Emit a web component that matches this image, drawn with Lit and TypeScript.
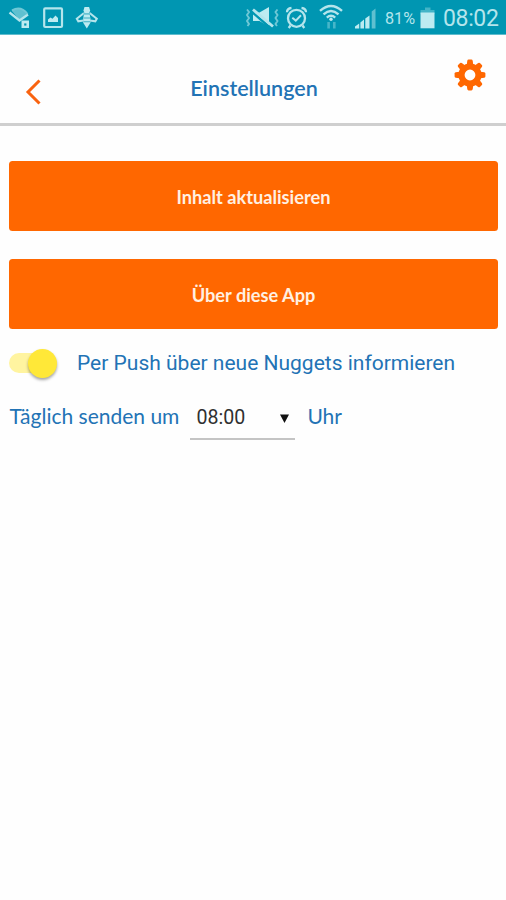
import { LitElement, html, css, svg } from "lit";
import { customElement, property, state } from "lit/decorators.js";
import { classMap } from "lit/directives/class-map.js";

@customElement("status-bar")
class StatusBar extends LitElement {
  static styles = css`
    :host {
      display: flex;
      background: #0096b2;
      border-bottom: 1px solid #5fbccd;
      box-sizing: border-box;
      height: 35px;
      color: #b4e5ec;
      font-family: Roboto, sans-serif;
      white-space: nowrap;
    }
    svg {
      display: block;
      height: 34px;
      flex: none;
      fill: none;
      stroke: #b4e5ec;
      stroke-width: 2;
    }
    .solid {
      fill: #bdebf1;
      stroke: none;
    }
    .dim {
      fill: #5fc0d0;
      stroke: none;
    }
    .faint {
      stroke: #6fc8d6;
    }
    .hole {
      fill: #0096b2;
      stroke: none;
    }
    .spacer {
      flex: 1;
    }
    .percent {
      width: 35px;
      font-size: 16.2px;
      line-height: 37px;
    }
    .clock {
      width: 63px;
      font-size: 23px;
      line-height: 37px;
      letter-spacing: -0.35px;
    }
  `;

  render() {
    return html`
      <svg width="36" viewBox="0 0 36 34">
        <path class="dim" d="M11.5 10.5Q20 5 28 14L19.5 20z" />
        <path d="M9.5 12.5 19.5 20.5 28 14.5" stroke-width="2.3" />
        <path class="faint" d="M12 10.3Q21 5.5 27.5 14" />
        <path class="solid" d="M21.5 20.5h7.5v7.5h-7.5z" />
        <path class="hole" d="M24.2 23.4h2.2v2.2h-2.2z" />
      </svg>
      <svg width="34" viewBox="36 0 34 34">
        <rect x="44.2" y="8.4" width="17.8" height="18.6" rx="1" stroke-width="2.2" />
        <path class="solid" d="M48 22v-2.5l2.5-2 2 1.2 3-3.2 2.5 2.5V22z" />
      </svg>
      <svg width="40" viewBox="70 0 40 34">
        <path class="solid" d="M84.5 7h4.6l1 3.5-1 3h-4.6l-1-3z" />
        <path class="solid" d="M84 13.5h5.6l.8 5v4.3l-3.6 5.8-3.6-5.8v-4.3z" />
        <path d="M84 13 76.8 18.8 78.3 21.3 83.5 20.5M89.6 13l7.2 5.8-1.5 2.5-5.2-.8" />
        <path stroke="#3fb0c4" stroke-width="1.1" d="M83.5 14h6.6M83.5 18h6.6M83.5 21.8h6.6" />
      </svg>
      <span class="spacer"></span>
      <svg width="42" viewBox="240 0 42 34">
        <path class="faint" stroke-width="1.9" d="M247 9.5l2 2.5-2 3 2 3-2 3 2 3-1.5 2M277.5 9.5l-2 2.5 2 3-2 3 2 3-2 3 1.5 2" />
        <path class="solid" d="M253 12.5h6.5l9.5-5.5v19.5l-9.5-5.5H253z" />
        <path d="M251.5 11.5 271 28.5" stroke="#0096b2" stroke-width="2.4" />
        <path d="M253 9.5 273 26.5" stroke-width="2.8" />
      </svg>
      <svg width="30" viewBox="282 0 30 34">
        <circle cx="296.5" cy="18.3" r="8.5" stroke-width="2.3" />
        <path d="M287 12.2Q287 8.5 291.5 8M306 12.2Q306 8.5 301.5 8M290.5 25.5 288.7 28M302.5 25.5l1.8 2.5" stroke-width="2.3" />
        <path d="M292.3 17.7 295.8 20.6 301 15.3" />
      </svg>
      <svg width="37" viewBox="312 0 37 34">
        <path d="M320 10.8Q331 1 342 10.8M323.5 14.3Q331 7.6 338.5 14.3M326.8 17.6Q331 14 335.2 17.6" stroke-width="2.4" />
        <circle class="solid" cx="331" cy="19.3" r="1.7" />
        <path class="dim" opacity=".75" d="M327.3 22h2.6v6.5h-2.6zM333 22h2.6v6.5H333z" />
      </svg>
      <svg width="36" viewBox="349 0 36 34">
        <path class="solid" d="M355 28.5v-2l4.2-3v5zM360.4 28.5v-6l3.6-3v9zM365.3 28.5v-10l4.2-3v13z" />
        <path class="dim" d="M371.7 28.5V11.5l3.8-3v20z" />
      </svg>
      <span class="percent">81%</span>
      <svg width="23" viewBox="420 0 23 34">
        <path class="dim" opacity=".7" d="M425 7.5h5.5V10h4v4h-14v-4h4.5z" />
        <path class="solid" d="M420.5 12.5h14v15.8h-14z" />
      </svg>
      <span class="clock">08:02</span>
    `;
  }
}

@customElement("action-button")
class ActionButton extends LitElement {
  @property() label = "";

  static styles = css`
    :host {
      display: block;
    }
    .button {
      display: block;
      width: 100%;
      height: 70px;
      border: 0;
      border-radius: 3.5px;
      padding: 2px 0 0;
      background: #ff6700;
      color: #fff0e2;
      font: 700 18.2px Lato, sans-serif;
    }
  `;

  render() {
    return html`<button class="button">${this.label}</button>`;
  }
}

@customElement("app-root")
class AppRoot extends LitElement {
  @state() private push = true;

  static styles = css`
    :host {
      display: block;
      height: 900px;
      overflow: hidden;
      background: #fefefe;
      color: #2273b5;
    }
    .header {
      display: grid;
      grid-template-columns: 60px 1fr 60px;
      height: 91px;
      box-sizing: border-box;
      border-bottom: 3px solid #cfcfcf;
    }
    .header svg {
      display: block;
    }
    .back {
      margin: 43px 0 0 24px;
    }
    .gear {
      margin: 24px 0 0 8px;
    }
    .title {
      margin: 37px 0 0;
      padding-left: 2px;
      text-align: center;
      font: 600 21.5px/32px Lato, sans-serif;
    }
    .content {
      padding: 35px 8px 0 9px;
    }
    action-button + action-button {
      margin-top: 28px;
    }
    .row {
      display: flex;
      align-items: center;
      white-space: nowrap;
    }
    .push {
      height: 32px;
      margin-top: 18px;
      font: 400 21px/32px Roboto, sans-serif;
    }
    .track {
      display: flex;
      align-items: center;
      width: 46px;
      height: 20px;
      margin: 0 22px 0 0;
      border-radius: 10px;
      background: #fff4a0;
    }
    .knob {
      width: 29px;
      height: 29px;
      border-radius: 50%;
      background: #ffe838;
      box-shadow: 0 2px 3px rgba(0, 0, 0, 0.35);
    }
    .on .knob {
      margin-left: 19px;
      flex: none;
    }
    .daily {
      height: 44px;
      margin-top: 16px;
      padding-left: 0.6px;
      font: 400 21px/42px Lato, sans-serif;
      align-items: flex-start;
    }
    .time {
      display: flex;
      align-items: center;
      justify-content: space-between;
      box-sizing: border-box;
      width: 105px;
      height: 45px;
      margin: 0 12px 0 11px;
      padding: 3px 6px 0;
      border-bottom: 2px solid #c4c4c4;
      color: #303030;
      font: 400 19.6px/40px Roboto, sans-serif;
    }
    .time svg {
      margin-top: 1px;
    }
  `;

  render() {
    const teeth = [0, 45, 90, 135, 180, 225, 270, 315];
    return html`
      <status-bar></status-bar>
      <header class="header">
        <svg class="back" width="20" height="28" viewBox="0 0 20 28">
          <path d="M15.5 2.5 4 14 15.5 25.5" fill="none" stroke="#f96310" stroke-width="3" />
        </svg>
        <h1 class="title">Einstellungen</h1>
        <svg class="gear" width="32" height="32" viewBox="-16 -16 32 32">
          <circle r="8.5" fill="none" stroke="#ff6700" stroke-width="6.2" />
          ${teeth.map(
            (a) => svg`<path transform=${`rotate(${a})`} d="M-3.2-10.5-2.7-14.3Q-2.4-15.4-1.4-15.4H1.4Q2.4-15.4 2.7-14.3L3.2-10.5z" fill="#ff6700" />`
          )}
        </svg>
      </header>
      <main class="content">
        <action-button label="Inhalt aktualisieren"></action-button>
        <action-button label="Über diese App"></action-button>
        <div class="row push">
          <span class=${classMap({ track: true, on: this.push })} @click=${() => (this.push = !this.push)}>
            <span class="knob"></span>
          </span>
          <span>Per Push über neue Nuggets informieren</span>
        </div>
        <div class="row daily">
          <span class="label">Täglich senden um</span>
          <span class="time">
            <span>08:00</span>
            <svg width="9" height="9" viewBox="0 0 9 9"><path d="M0 .5h9L4.5 9z" fill="#111" /></svg>
          </span>
          <span class="label">Uhr</span>
        </div>
      </main>
    `;
  }
}
